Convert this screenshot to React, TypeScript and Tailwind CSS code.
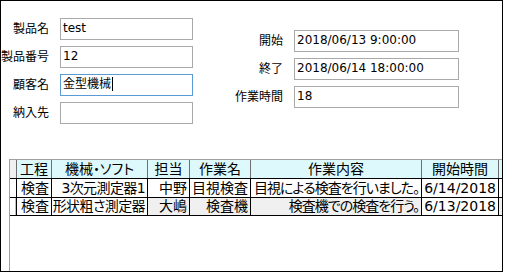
import React from "react";

const formFont = "font-['DejaVu_Sans','Noto_Sans_CJK_JP',sans-serif]";
const gridFont =
  "font-['DejaVu_Sans','Noto_Sans_CJK_JP',sans-serif] [font-feature-settings:'palt']";

interface FieldProps {
  label: string;
  value: string;
  focused?: boolean;
  width: string;
}

function Field({ label, value, focused, width }: FieldProps) {
  return (
    <>
      <div className="flex h-[22px] items-center justify-end pb-[3px] text-[12px] leading-none whitespace-nowrap text-black font-['Noto_Sans_CJK_JP',sans-serif]">
        {label}
      </div>
      <div
        className={`flex h-[22px] items-center border pb-[2px] pl-[2px] text-[12px] leading-none text-black ${width} ${formFont} ${
          focused ? "border-[#5b9bd5]" : "border-[#a9a9a9]"
        }`}
      >
        <span>{value}</span>
        {focused && <span className="ml-px h-[14px] w-px bg-black" />}
      </div>
    </>
  );
}

const columns = [
  { title: "工程", w: "w-[35px]" },
  { title: "機械・ソフト", w: "w-[96px]" },
  { title: "担当", w: "w-[42px]" },
  { title: "作業名", w: "w-[61px]" },
  { title: "作業内容", w: "w-[171px]" },
  { title: "開始時間", w: "w-[77px]" },
  { title: "終了時間", w: "w-[90px]" },
];

const rows = [
  ["検査", "3次元測定器1", "中野", "目視検査", "目視による検査を行いました。", "6/14/2018", "6/14/2018"],
  ["検査", "形状粗さ測定器", "大嶋", "検査機", "検査機での検査を行う。", "6/13/2018", "6/13/2018"],
];

const grayCells = [false, false, true, true, true, false, true];

export default function App() {
  return (
    <div className="h-[273px] w-[505px] bg-white">
      <div className="flex h-[272px] w-[503px] flex-col overflow-hidden border border-black bg-white">
        {/* Form */}
        <div className="flex items-start pt-[17px]">
          <div className="grid grid-cols-[48px_133px] gap-x-[11px] gap-y-[6px]">
            <Field label="製品名" value="test" width="w-[133px]" />
            <Field label="製品番号" value="12" width="w-[133px]" />
            <Field label="顧客名" value="金型機械" width="w-[133px]" focused />
            <Field label="納入先" value="" width="w-[133px]" />
          </div>
          <div className="mt-[12px] ml-[30px] grid grid-cols-[60px_165px] gap-x-[11px] gap-y-[6px]">
            <Field label="開始" value="2018/06/13 9:00:00" width="w-[165px]" />
            <Field label="終了" value="2018/06/14 18:00:00" width="w-[165px]" />
            <Field label="作業時間" value="18" width="w-[165px]" />
          </div>
        </div>

        {/* Datasheet */}
        <div className={`mt-[35px] ml-[8px] w-[600px] flex-1 border-t border-l border-[#a0a0a0] text-[14px] leading-none text-black ${gridFont}`}>
          <div className="flex h-[19px] border-b border-black">
            <div className="w-[7px] shrink-0 border-r border-[#6f6f6f] bg-[#f0f0f0]" />
            {columns.map((c) => (
              <div
                key={c.title}
                className={`flex shrink-0 items-center justify-center border-r border-[#6f6f6f] bg-[#ddf9fb] pb-px ${c.w}`}
              >
                {c.title}
              </div>
            ))}
          </div>
          {rows.map((r, ri) => (
            <div
              key={ri}
              className={`flex border-b border-black ${ri === 0 ? "h-[19px]" : "h-[18px]"}`}
            >
              <div className="flex w-[7px] shrink-0 justify-end border-r border-black bg-white">
                {ri === 1 && <div className="w-px bg-[#9cc8ee]" />}
              </div>
              {r.map((v, ci) => (
                <div
                  key={ci}
                  className={`flex shrink-0 items-center justify-end overflow-hidden border-r border-black pr-[2px] pb-px whitespace-nowrap ${columns[ci].w} ${
                    ri === 1 && grayCells[ci] ? "bg-[#f0f0f0]" : "bg-white"
                  } ${ci === 4 ? "tracking-[-1px]" : ""} ${ci === 1 ? "tracking-[-0.6px]" : ""} ${ci === 6 ? "justify-start pl-[2px] text-[#c8c8c8]" : ""}`}
                >
                  {v}
                </div>
              ))}
            </div>
          ))}
        </div>
      </div>
    </div>
  );
}
